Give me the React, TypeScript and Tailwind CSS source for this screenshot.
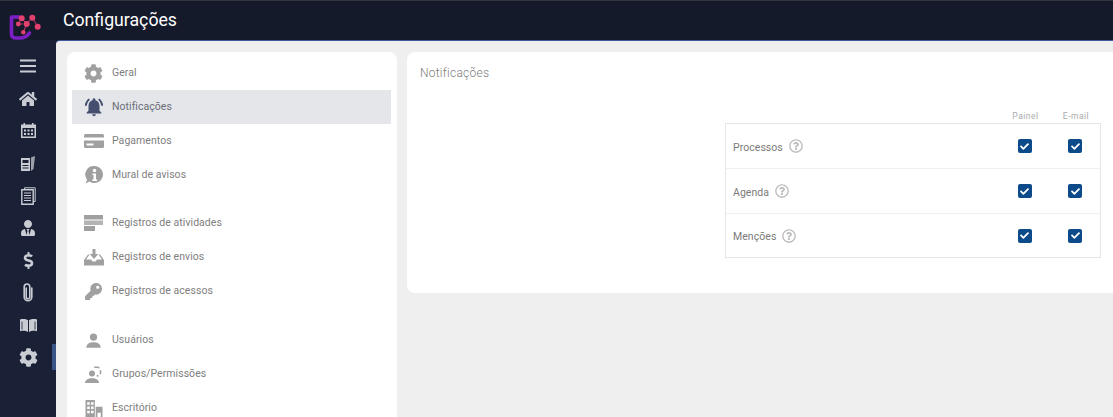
import type { ReactNode } from "react";
import { FaCheck, FaCog, FaDollarSign, FaHome, FaKey, FaRegQuestionCircle, FaUserTie } from "react-icons/fa";
import { MdNotificationsActive } from "react-icons/md";

const Bars = () => (
  <svg width="18" height="14" viewBox="0 0 18 14" fill="currentColor">
    <rect y="0.5" width="16" height="2" x="1" />
    <rect y="6" width="16" height="2" x="1" />
    <rect y="11.5" width="16" height="2" x="1" />
  </svg>
);

const Calendar = () => (
  <svg width="17" height="17" viewBox="0 0 17 17" fill="currentColor">
    <path d="M1 2.500h2.500V1H5v1.500h7V1h1.500v1.500H16V16H1zM2.500 6v8.500h12V6z" />
    <path d="M4 7.500h2v2H4zM7.500 7.500h2v2h-2zM11 7.500h2v2h-2zM4 11h2v2H4zM7.500 11h2v2h-2zM11 11h2v2h-2z" />
  </svg>
);

const News = () => (
  <svg width="16" height="17" viewBox="0 0 16 17" fill="currentColor">
    <path d="M1 3l9 0v13H1z" />
    <path d="M11 2.500l4-1.500-1.500 13-2.500 2z" opacity="0.75" />
    <path d="M2.500 5h6v3h-6zM2.500 10h6v1h-6zM2.500 12.500h6v1h-6z" fill="#1a2136" />
  </svg>
);

const Doc = () => (
  <svg width="15" height="18" viewBox="0 0 15 18" fill="none" stroke="currentColor">
    <path d="M3.500 2.500V.8h10.700v13.700h-1.700" />
    <path d="M.8 2.800h11.400v14.400H.8z" strokeWidth="1.400" />
    <path d="M3 6h7M3 8.500h7M3 11h7M3 13.500h7" strokeWidth="1.200" />
  </svg>
);

const Clip = () => (
  <svg width="12" height="19" viewBox="0 0 12 19" fill="none" stroke="currentColor" strokeWidth="1.600" strokeLinecap="round">
    <path d="M4.200 5v9a1.800 1.800 0 0 0 3.600 0V3.800a2.800 2.800 0 0 0-5.600 0V14a3.800 3.800 0 0 0 7.600 0V5" />
  </svg>
);

const Book = () => (
  <svg width="19" height="15" viewBox="0 0 19 15" fill="currentColor">
    <path d="M1 1.500c3-.8 6-.6 8 .8V14c-2-1.200-5-1.400-8-.8z" />
    <path d="M18 1.500c-3-.8-6-.6-8 .8V14c2-1.200 5-1.400 8-.8z" />
    <path d="M3 3.500v8M16 3.500v8" stroke="#1a2136" strokeWidth="0.800" />
  </svg>
);

const CardIcon = () => (
  <svg width="20" height="16" viewBox="0 0 20 16" fill="currentColor">
    <path d="M1.500 1h17A1.500 1.500 0 0 1 20 2.500v2H0v-2A1.500 1.500 0 0 1 1.500 1zM0 7.500h20v6a1.500 1.500 0 0 1-1.500 1.500h-17A1.500 1.500 0 0 1 0 13.500z" />
    <path d="M2.500 10.500h7v2h-7z" fill="#fff" />
  </svg>
);

const InfoBubble = () => (
  <svg width="20" height="20" viewBox="0 0 20 20">
    <path d="M10.500 1a8.500 8.500 0 1 1-5 15.400L1.500 18.500l1.600-3.800A8.500 8.500 0 0 1 10.500 1z" fill="currentColor" />
    <circle cx="10.500" cy="5.500" r="1.700" fill="#fff" />
    <path d="M8.500 8.500h3.500v6h1.200V16H8.300v-1.500h1.200V10H8.500z" fill="#fff" />
  </svg>
);

const Activity = () => (
  <svg width="19" height="16" viewBox="0 0 19 16" fill="currentColor">
    <path d="M0 0h19v4.500H0z" />
    <path d="M0 5.500h19V10H0z" opacity="0.8" />
    <path d="M0 11h11v5H0z" />
  </svg>
);

const Inbox = () => (
  <svg width="20" height="17" viewBox="0 0 20 17" fill="currentColor">
    <path d="M8.500 0h3v5h2.800L10 10 5.700 5h2.800z" />
    <path d="M4 5.500h1.500L2 10.500h5l1.500 2h3l1.500-2h5l-3.500-5H16l4 5.500v5.500H0V11z" />
  </svg>
);

const User = () => (
  <svg width="17" height="15" viewBox="0 0 20 17" fill="currentColor">
    <circle cx="10" cy="4.500" r="4.300" />
    <path d="M1.500 17c0-4.500 4-6.500 8.500-6.500s8.500 2 8.500 6.500z" />
  </svg>
);

const Group = () => (
  <svg width="20" height="17" viewBox="0 0 20 17" fill="currentColor">
    <circle cx="8" cy="7.500" r="3" />
    <path d="M1 17c0-3 3-4.800 7-4.800s7 1.800 7 4.800z" />
    <path d="M10 .5h3.500c1.200 0 2 .6 2.500 1.500l-1.500.5c-.3-.4-.6-.6-1.200-.6H10.500zM15.500 4.500l1.500-.5c.5 1.500.5 3 0 4.500l-1.500-.5c.4-1.200.4-2.300 0-3.500zM12.500 10.500l.3-1.500c.8 0 1.400 0 2 .5l-.5 1.300z" />
  </svg>
);

const Office = () => (
  <svg width="18" height="17" viewBox="0 0 20 20">
    <path d="M0 0h11v20H0z" fill="currentColor" />
    <path d="M12 8h8v12h-2v-5h-4v5h-2z" fill="currentColor" />
    <path d="M2 2.500h3v3H2zM6.500 2.500h3v3h-3zM2 7.500h3v3H2zM6.500 7.500h3v3h-3zM2 12.500h3v3H2zM6.500 12.500h3v3h-3z" fill="#fff" />
  </svg>
);

const sideIcons = [
  <Bars key="bars" />,
  <FaHome key="home" size={18} />,
  <Calendar key="calendar" />,
  <News key="news" />,
  <Doc key="doc" />,
  <FaUserTie key="user" size={16} />,
  <FaDollarSign key="dollar" size={17} />,
  <Clip key="clip" />,
  <Book key="book" />,
  <FaCog key="cog" size={19} />,
];

const groups: { label: string; icon: ReactNode; active?: boolean }[][] = [
  [
    { label: "Geral", icon: <FaCog size={19} /> },
    { label: "Notificações", icon: <MdNotificationsActive size={22} />, active: true },
    { label: "Pagamentos", icon: <CardIcon /> },
    { label: "Mural de avisos", icon: <InfoBubble /> },
  ],
  [
    { label: "Registros de atividades", icon: <Activity /> },
    { label: "Registros de envios", icon: <Inbox /> },
    { label: "Registros de acessos", icon: <FaKey size={17} /> },
  ],
  [
    { label: "Usuários", icon: <User /> },
    { label: "Grupos/Permissões", icon: <Group /> },
    { label: "Escritório", icon: <Office /> },
  ],
];

const rows = ["Processos", "Agenda", "Menções"];

function Logo() {
  return (
    <svg width="33" height="27" viewBox="0 0 33 27" fill="none">
      <path d="M2.500 3H10M2.500 3v17q0 4 4.500 4h4q6 0 9.500-5" stroke="#7a1fc4" strokeWidth="3.600" strokeLinecap="round" />
      <path d="M12.700 4.300L9.300 10l4.500 0M12.700 4.300L17.700 10 23.300 3.300 28.700 12.700M17.700 10L14.300 18.300" stroke="#c9386f" strokeWidth="1" />
      <circle cx="12.700" cy="4.300" r="3" fill="#e2406f" />
      <circle cx="23.300" cy="3.800" r="3" fill="#e2406f" />
      <circle cx="9.300" cy="10" r="2.400" fill="#e2406f" />
      <circle cx="17.700" cy="10" r="3" fill="#e2406f" />
      <circle cx="28.700" cy="12.700" r="3" fill="#e2406f" />
      <circle cx="14.300" cy="18.300" r="2.200" fill="#e2406f" />
    </svg>
  );
}

function Check() {
  return (
    <span className="w-[14px] h-[14px] rounded-[2px] bg-[#0d4a8a] flex items-center justify-center text-white">
      <FaCheck size={9} />
    </span>
  );
}

export default function App() {
  return (
    <div className="w-[1113px] h-[417px] overflow-hidden flex flex-col bg-[#161b2e] font-['Roboto',sans-serif]">
      <header className="h-[40px] shrink-0 flex items-center border-t border-[#33363f] bg-[#151a2b]">
        <div className="w-[56px] h-full self-start pl-[9px] pt-[13px]">
          <Logo />
        </div>
        <h1 className="pl-[7px] text-[17.7px] text-white">Configurações</h1>
      </header>

      <div className="flex-1 min-h-0 flex">
        <nav className="w-[56px] shrink-0 flex flex-col items-center pt-[10px] bg-[#1a2136] relative">
          {sideIcons.map((icon, i) => (
            <div key={i} className="h-[32.4px] w-full flex items-center justify-center text-[#c9ccd3] shrink-0">
              {icon}
            </div>
          ))}
          <span className="absolute right-0 top-[304px] w-[4px] h-[26px] bg-[#3b5488]" />
        </nav>

        <main className="flex-1 min-w-0 flex items-start gap-[10px] pl-[11px] pt-[11px] bg-[#efefef] rounded-tl-[4px] border-t border-[#3d5a9e]">
          <aside className="w-[330px] h-[400px] shrink-0 rounded-[8px] bg-white pl-[5px] pr-[6px] pt-[4px]">
            {groups.map((group, g) => (
              <ul key={g} className={g === 0 ? "mb-[14px]" : "mb-[15px]"}>
                {group.map((item) => (
                  <li
                    key={item.label}
                    className={`h-[34px] flex items-center text-[10.5px] tracking-[0.05px] ${item.active ? "bg-[#e4e6ea] text-[#6a6e78]" : "text-[#808080]"}`}
                  >
                    <span className={`w-[40px] flex justify-center pl-[3px] ${item.active ? "text-[#454e6e]" : "text-[#a0a0a0]"}`}>
                      {item.icon}
                    </span>
                    {item.label}
                  </li>
                ))}
              </ul>
            ))}
          </aside>

          <section className="flex-1 min-w-0 h-[241px] rounded-l-[8px] bg-white pl-[13px] pt-[14px]">
            <h2 className="text-[12px] leading-[14px] tracking-[0.25px] font-light text-[#7d7d7d]">Notificações</h2>
            <div className="ml-[305px] mr-[12px] mt-[32px]">
              <div className="h-[11px] flex justify-end text-[8.5px] leading-[8px] tracking-[0.5px] text-[#ababab]">
                <span className="w-[50px] pr-[1px] text-center">Painel</span>
                <span className="w-[50px] text-center">E-mail</span>
              </div>
              <div className="border border-[#e6e6e6] divide-y divide-[#f0f0f0]">
                {rows.map((row) => (
                  <div key={row} className="h-[45px] last:h-[43px] flex items-center pl-[7px] text-[10.5px] tracking-[0.05px] text-[#7b7b7b]">
                    <span className="mt-[3px]">{row}</span>
                    <FaRegQuestionCircle size={14} className="ml-[6px] text-[#bbbbbb]" />
                    <div className="ml-auto flex">
                      <span className="w-[50px] pr-[1px] flex justify-center"><Check /></span>
                      <span className="w-[50px] flex justify-center"><Check /></span>
                    </div>
                  </div>
                ))}
              </div>
            </div>
          </section>
        </main>
      </div>
    </div>
  );
}
